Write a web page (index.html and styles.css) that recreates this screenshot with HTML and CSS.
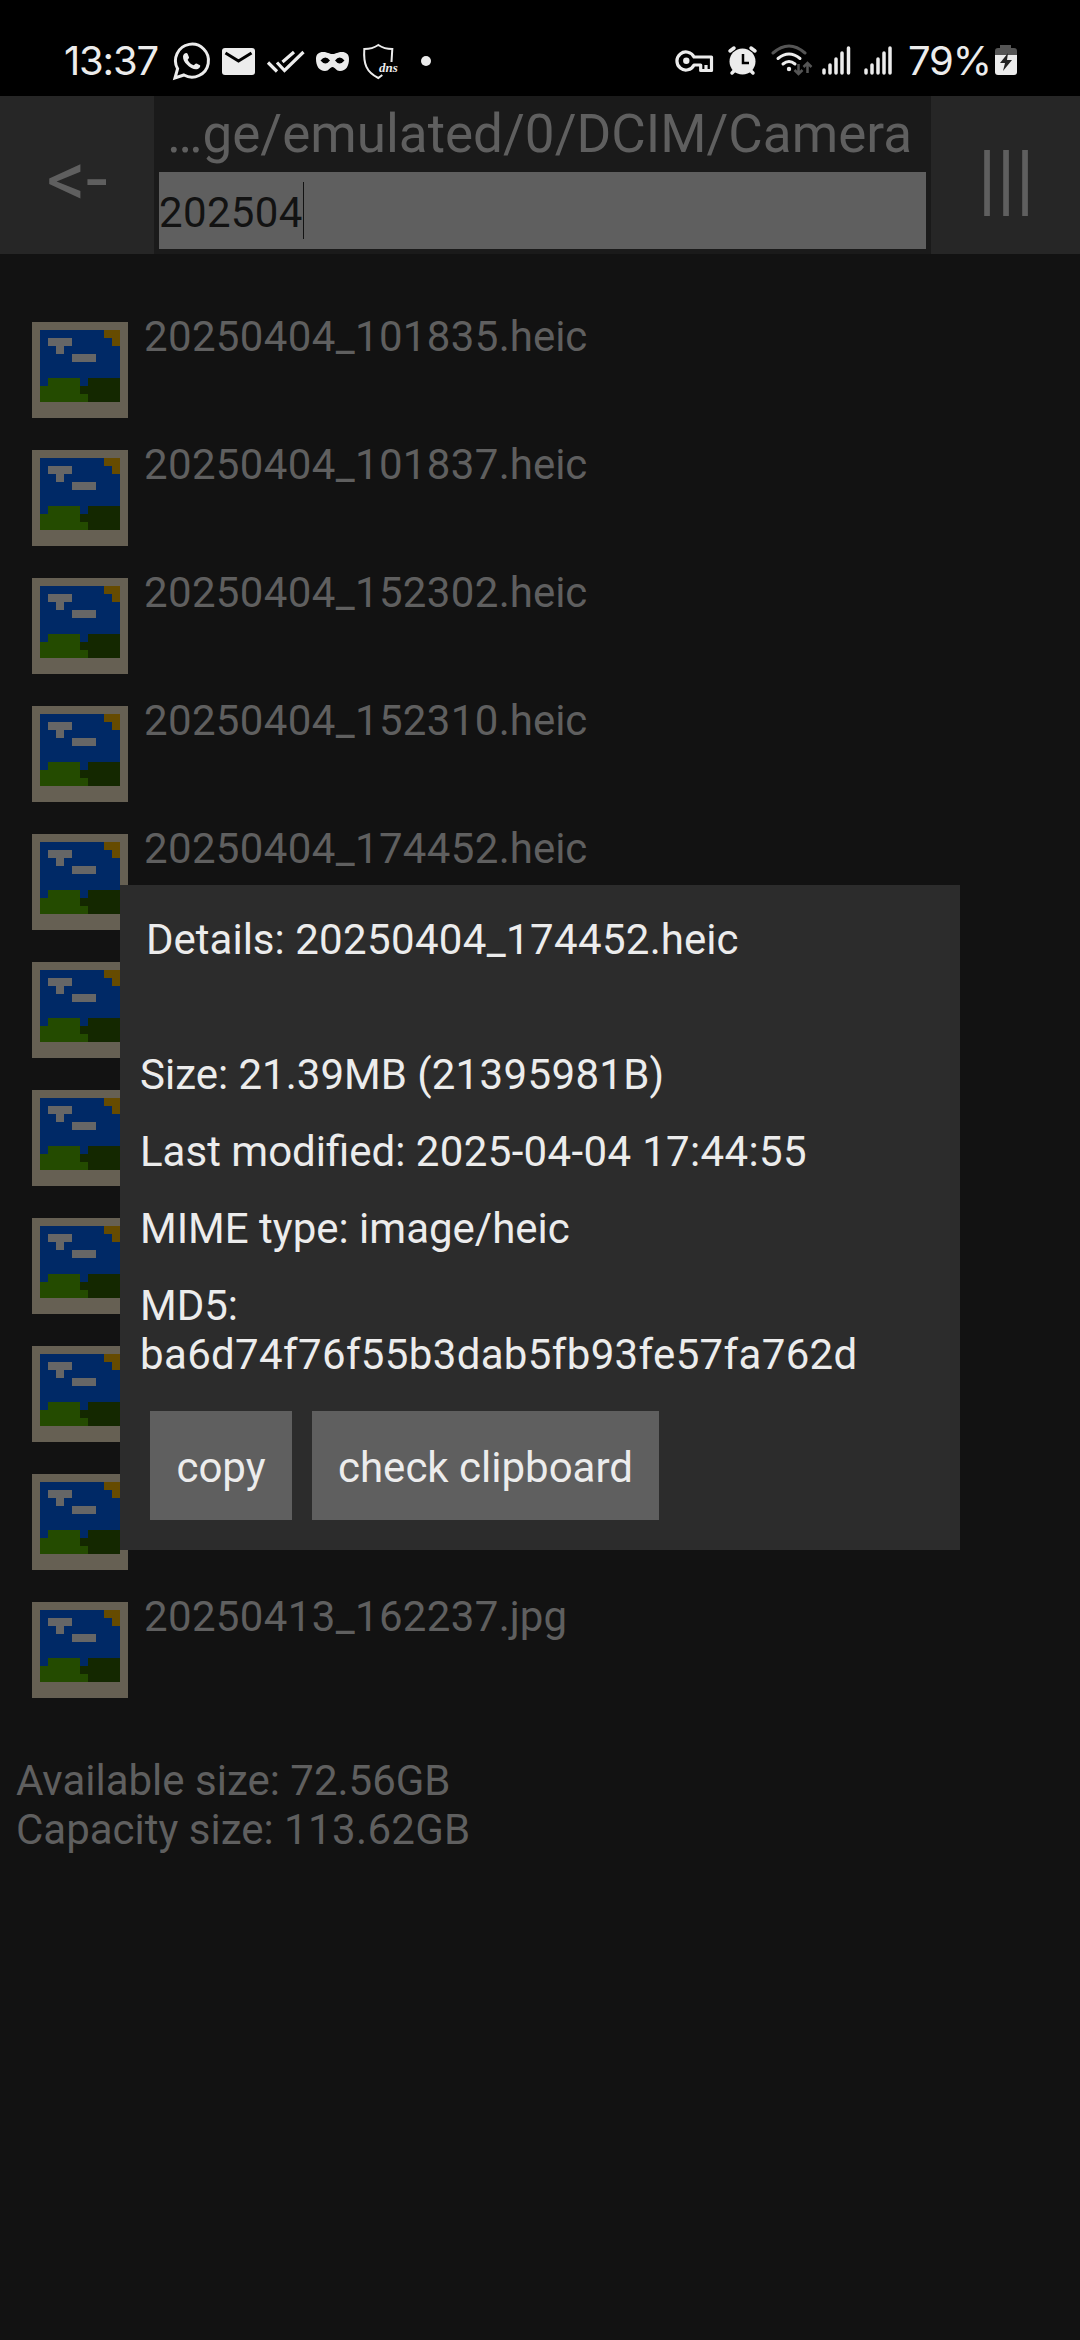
FILE: index.html
```html
<!DOCTYPE html>
<html lang="en">
<head>
<meta charset="utf-8">
<title>Camera files</title>
<link rel="stylesheet" href="styles.css">
</head>
<body>
<svg class="defs" width="0" height="0">
  <symbol id="pic" viewBox="0 0 12 12" shape-rendering="crispEdges">
    <path fill="#666053" d="M0 0h12v12H0z"/>
    <path fill="#002966" d="M1 1h10v9H1z"/>
    <path fill="#666666" d="M2 2h3v1H4v1H3V3H2zM5 4h3v1H5z"/>
    <path fill="#664b00" d="M9 1h2v2h-1V2H9z"/>
    <path fill="#142800" d="M7 7h4v3H6V8h1z"/>
    <path fill="#244b00" d="M2 7h4v2h1v1H1V8h1z"/>
  </symbol>
</svg>
<div class="screen">
  <div class="status">
    <span class="clock">13:37</span>
    <svg class="icons-left" width="270" height="44" viewBox="170 38 270 44" fill="none" stroke="#ececec">
      <path stroke-width="3" d="M175 78l2.600-9.300a16.500 16.500 0 1 1 6.300 6.300z"/>
      <path fill="#ececec" stroke="none" transform="translate(183 53) scale(.86)" d="M0 4c0-2 2-4 4-4 1 0 1.500 1 3 5 .3 1-1.500 2.500-1.500 3 2 3.500 4 5 7 6.200.5 0 2-2 2.800-2 1 .2 4.500 1.800 4.700 2.300.3 2-1.700 4.500-5 4.500-3 0-7.500-2-10.500-5.500-3-3-4.500-6-4.500-9.500z"/>
      <rect x="222" y="48" width="33" height="27" rx="3" fill="#ececec" stroke="none"/>
      <path stroke="#000" stroke-width="3" d="M225.500 53l13 8 13-8"/>
      <path stroke-width="3.200" d="M268 62.500l9 9M277 62.500l7.500 8L303.500 52M282.500 62L294 52"/>
      <path fill="#ececec" stroke="none" fill-rule="evenodd" d="M316 59c0-5 3-7 7-7 4.500 0 6 2 9.500 2s5-2 9.500-2c4 0 7 2 7 7 0 7-3 12-9 12-4 0-5-4-7.500-4s-3.500 4-7.500 4c-6 0-9-5-9-12zM320.500 60.500q5 6 9.500 0-4.500-6-9.500 0zM335 60.500q4.500 6 9.500 0-5-6-9.500 0z"/>
      <path stroke-width="2" d="M391.500 62l.8-13q-8 0-14-4-6 4-14 4c-1 15 2 23 14 29l4-3"/>
      <text class="dns" x="379" y="72">dns</text>
      <circle cx="426" cy="61" r="5" fill="#ececec" stroke="none"/>
    </svg>
    <svg class="icons-right" width="220" height="44" viewBox="674 38 220 44" fill="none" stroke="#ececec">
      <path stroke-width="3.200" stroke-linejoin="round" d="M694 57h17.500v13.500h-10.800V65H694A9 9 0 1 1 694 57zM706 65v5"/>
      <circle cx="686.300" cy="60.800" r="3.200" fill="#ececec" stroke="none"/>
      <circle cx="742.500" cy="61.500" r="13" fill="#ececec" stroke="none"/>
      <path stroke-width="3.500" stroke-linecap="round" d="M730 51l4-3M755 51l-4-3M735 70l-3 3M750 70l3 3"/>
      <path stroke="#000" stroke-width="2.500" d="M743 54v9h6"/>
      <path stroke="#555" stroke-width="3" stroke-linecap="round" d="M773 53q16-14 32 0"/>
      <path stroke-width="3" stroke-linecap="round" d="M778 58.500q11-9 22 0M783 64q6-5 12 0"/>
      <circle cx="789" cy="69" r="2.200" fill="#ececec" stroke="none"/>
      <path stroke="#555" stroke-width="2.500" d="M798.500 64v10m-4-4l4 4 4-4M807.500 73V63m-4 4l4-4 4 4"/>
      <path stroke-width="3.500" stroke-linecap="round" d="M824 70v3M830 65v8M836 59v14M842 53v20M848.500 48v25M866 70v3M872 65v8M878 59v14M884 53v20M890 48v25"/>
    </svg>
    <span class="percent">79%</span>
    <svg class="battery" width="22" height="32" viewBox="0 0 22 32">
      <path fill="#555" d="M5 1h11v3h3q3 0 3 3v4H0V7q0-3 3-3h2z"/>
      <path fill="#ececec" d="M0 11h22v17q0 3-3 3H3q-3 0-3-3z"/>
      <path fill="#222" d="M13 9L5 19h5l-2 8 9-11h-5z"/>
    </svg>
  </div>
  <div class="header">
    <div class="back">&lt;-</div>
    <div class="path">
      <div class="title">…ge/emulated/0/DCIM/Camera</div>
      <div class="search"><span class="n">202504</span><span class="caret"></span></div>
    </div>
    <div class="menu">|||</div>
  </div>
  <div class="list">
    <div class="row"><svg class="pic"><use href="#pic"/></svg><span><span class="n">20250404_101835</span>.heic</span></div>
    <div class="row"><svg class="pic"><use href="#pic"/></svg><span><span class="n">20250404_101837</span>.heic</span></div>
    <div class="row"><svg class="pic"><use href="#pic"/></svg><span><span class="n">20250404_152302</span>.heic</span></div>
    <div class="row"><svg class="pic"><use href="#pic"/></svg><span><span class="n">20250404_152310</span>.heic</span></div>
    <div class="row"><svg class="pic"><use href="#pic"/></svg><span><span class="n">20250404_174452</span>.heic</span></div>
    <div class="row"><svg class="pic"><use href="#pic"/></svg></div>
    <div class="row"><svg class="pic"><use href="#pic"/></svg></div>
    <div class="row"><svg class="pic"><use href="#pic"/></svg></div>
    <div class="row"><svg class="pic"><use href="#pic"/></svg></div>
    <div class="row"><svg class="pic"><use href="#pic"/></svg></div>
    <div class="row"><svg class="pic"><use href="#pic"/></svg><span><span class="n">20250413_162237</span>.jpg</span></div>
  </div>
  <div class="footer">Available size: 72.56GB<br>Capacity size: <span class="n">113.62</span>GB</div>
  <div class="dialog">
    <div class="dialog-title">Details: <span class="n">20250404_174452</span>.heic</div>
    <p>Size: 21.39MB (<span class="n">21395981</span>B)</p>
    <p>Last modified: <span class="n">2025-04-04 17:44:55</span></p>
    <p>MIME type: image/heic</p>
    <p>MD5:<br><span class="n">ba6d74f76f55b3dab5fb93fe57fa762d</span></p>
    <div class="buttons"><div class="button">copy</div><div class="button wide">check clipboard</div></div>
  </div>
</div>
</body>
</html>
```
FILE: styles.css
```css
* { box-sizing: border-box; }
body { margin: 0; background: #121212; }
.defs { position: absolute; }
.screen {
  position: relative;
  width: 1080px;
  height: 2340px;
  overflow: hidden;
  background: #121212;
  color: #5f5f5f;
  font: 42px/49px Roboto, sans-serif;
}
.n { letter-spacing: .35px; }
.status {
  display: flex;
  align-items: flex-start;
  height: 96px;
  padding-top: 38px;
  background: #000;
  color: #ececec;
}
.clock, .percent { font: 40px/46px Inter, sans-serif; white-space: nowrap; }
.clock { width: 106px; margin-left: 64px; letter-spacing: -1.2px; }
.icons-left { flex: none; }
.icons-right { flex: none; margin-left: 234px; }
.percent { width: 87px; margin-left: 14px; letter-spacing: -1.2px; }
.battery { margin-top: 6px; flex: none; }
.dns { font: italic bold 13px "Liberation Serif", serif; fill: #ececec; stroke: none; }
.header { display: flex; height: 158px; background: #1a1a1a; }
.back, .menu {
  padding-top: 38px;
  background: #262626;
  font-size: 78px;
  line-height: 91px;
  text-align: center;
}
.back { width: 154px; }
.menu { width: 149px; padding-left: 1px; }
.path { flex: 1; padding: 7px 5px 5px; }
.title { height: 69px; padding-right: 6px; font-size: 53px; line-height: 63px; text-align: center; white-space: nowrap; }
.search {
  display: flex;
  align-items: center;
  height: 77px;
  background: #5f5f5f;
  color: #121212;
}
.search .n { padding-top: 3px; }
.caret { width: 1px; height: 57px; background: #121212; }
.list { padding: 52px 32px 0; }
.row { display: flex; gap: 16px; height: 128px; padding-top: 6px; }
.pic { width: 96px; height: 96px; margin-top: 10px; flex: none; }
.footer { padding: 42px 16px 0; }
.dialog {
  position: absolute;
  left: 120px;
  top: 885px;
  width: 840px;
  height: 665px;
  padding: 30px 20px 0;
  background: #2c2c2c;
  color: #ececec;
}
.dialog-title { padding-left: 6px; margin-bottom: 86px; }
.dialog p { margin: 0 0 28px; }
.buttons { display: flex; gap: 20px; margin-top: 32px; padding-left: 10px; }
.button { width: 142px; height: 109px; padding-top: 32px; background: #5f5f5f; text-align: center; white-space: nowrap; }
.button.wide { width: 347px; }
```
